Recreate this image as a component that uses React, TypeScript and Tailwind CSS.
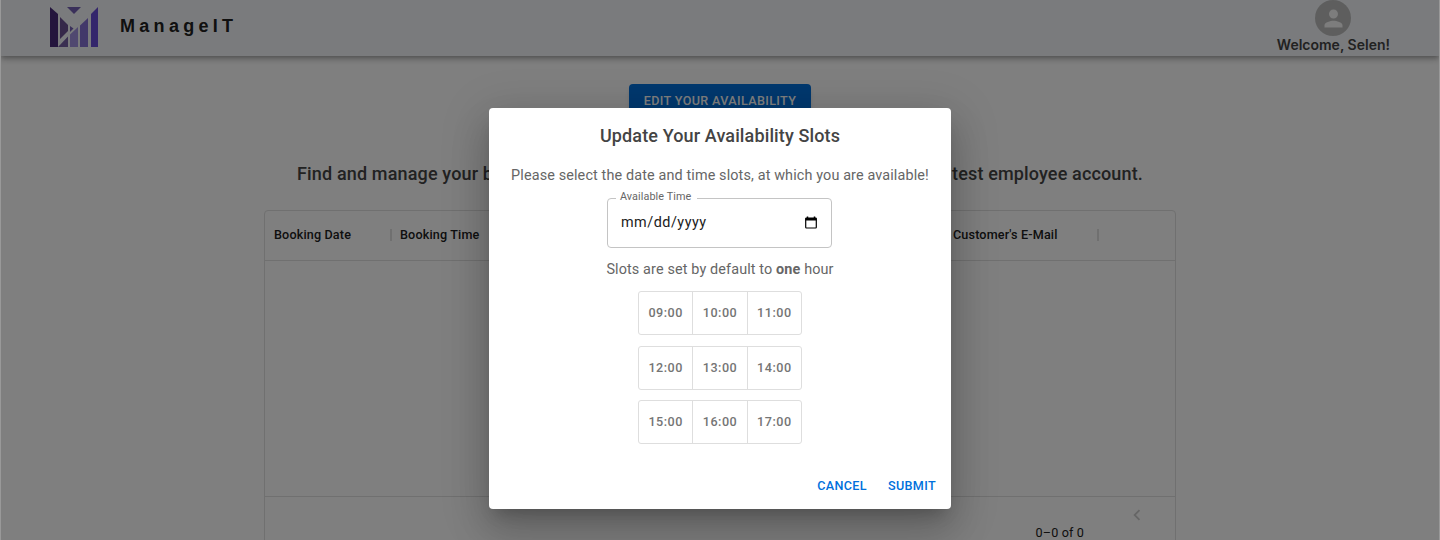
import React from "react";

function Logo() {
  return (
    <svg width="48" height="40" viewBox="0 0 48 40" className="block">
      <path d="M0 0L8 7V40H0Z" fill="#482a7a" />
      <path d="M10 10L18 18V24L10 32Z" fill="#6a5092" />
      <path d="M17 0H31L24 7Z" fill="#7460b4" />
      <path d="M20 19L23.5 21.5L20 25Z" fill="#7460b4" />
      <path d="M18 29.5V40H8Z" fill="#745fa4" />
      <path d="M20 27.5L28 20V40H20Z" fill="#a090e0" />
      <path d="M30 18.5L38 11V40H30Z" fill="#8470d4" />
      <path d="M41 7L48 0V40H41Z" fill="#684cd8" />
    </svg>
  );
}

function Header() {
  return (
    <header className="relative flex h-14 items-start justify-between bg-[#f4f7fa] pl-[49px] pr-[49px] shadow-[0_2px_4px_-1px_rgba(0,0,0,0.2),0_4px_5px_0_rgba(0,0,0,0.14),0_1px_10px_0_rgba(0,0,0,0.12)]">
      <div className="flex pt-[7px]">
        <Logo />
        <span className="ml-[22px] mt-[7px] font-['Liberation_Sans',sans-serif] text-[18px] font-bold leading-6 tracking-[4.3px] text-[#212121]">ManageIT</span>
      </div>
      <div className="flex flex-col items-center">
        <div className="flex h-9 w-9 items-center justify-center rounded-full bg-[#bdbdbd]">
          <svg width="27" height="27" viewBox="0 0 24 24" fill="#fafafa">
            <path d="M12 12c2.21 0 4-1.79 4-4s-1.79-4-4-4-4 1.79-4 4 1.79 4 4 4zm0 2c-2.67 0-8 1.34-8 4v2h16v-2c0-2.66-5.33-4-8-4z" />
          </svg>
        </div>
        <span className="font-['Inter',sans-serif] text-[14px] font-semibold leading-[18px] text-[#444]">Welcome, Selen!</span>
      </div>
    </header>
  );
}

function Slots({ times }: { times: string[] }) {
  return (
    <div className="flex h-11 w-[164px] overflow-hidden rounded-[3px] border border-[#dedede]">
      {times.map((t) => (
        <div key={t} className="flex flex-1 items-center justify-center border-l border-[#dedede] text-[12.6px] font-medium tracking-[0.5px] text-[#757575] first:border-l-0">{t}</div>
      ))}
    </div>
  );
}

function Bookings() {
  return (
    <section className="mt-6 h-[360px] w-[912px] rounded-[4px] border border-[#e0e0e0]">
      <div className="flex h-[50px] items-center border-b border-[#e0e0e0] text-[12.6px] font-medium tracking-[0.15px] text-[#212121]">
        <div className="flex w-[127px] items-center justify-between pl-[9px]">
          Booking Date<span className="h-3 w-[2px] bg-[#e0e0e0]" />
        </div>
        <div className="w-[561px] pl-2">Booking Time</div>
        <div className="flex w-[146px] items-center justify-between">
          Customer's E-Mail<span className="h-3 w-[2px] bg-[#e0e0e0]" />
        </div>
      </div>
      <div className="h-[236px] border-b border-[#e0e0e0]" />
      <div className="flex justify-end pr-[27px]">
        <span className="mt-[27px] text-[12.6px] leading-[18px] tracking-[0.15px] text-[#212121]">0–0 of 0</span>
        <svg className="ml-[42px] mt-[7px]" width="22" height="22" viewBox="0 0 24 24" fill="#cccccc">
          <path d="M15.41 7.41L14 6l-6 6 6 6 1.41-1.41L10.83 12z" />
        </svg>
      </div>
    </section>
  );
}

function Dialog() {
  return (
    <div role="dialog" className="flex h-[401px] w-[462px] flex-col items-center rounded-[4px] bg-white text-[#666] shadow-[0_11px_15px_-7px_rgba(0,0,0,0.2),0_24px_38px_3px_rgba(0,0,0,0.14),0_9px_46px_8px_rgba(0,0,0,0.12)]">
      <h2 className="mt-[14px] text-[18px] font-medium leading-7 tracking-[0.13px] text-[#444]">Update Your Availability Slots</h2>
      <p className="mt-4 whitespace-nowrap text-[14.4px] leading-5 tracking-[0.13px]">Please select the date and time slots, at which you are available!</p>
      <div className="relative mr-px mt-3 flex h-[50px] w-[225px] items-center justify-between rounded-[4px] border border-[#c4c4c4] px-[13px] text-[14.4px] text-[#212121]">
        <span className="absolute left-2 top-[-10px] h-4 bg-white pl-1 pr-[6px] text-[10.8px] leading-4 tracking-[0.09px] text-[#666]">Available Time</span>
        <span className="tracking-[0.5px]">mm/dd/yyyy</span>
        <svg width="14" height="14" viewBox="0 0 14 14">
          <path d="M3.5 0.5V3M10.5 0.5V3" stroke="#000" strokeWidth="1.5" />
          <rect x="1.7" y="2.2" width="10.6" height="9.8" rx="0.7" fill="none" stroke="#000" strokeWidth="1.2" />
          <path d="M1.5 2H12.5V4.5H1.5Z" />
        </svg>
      </div>
      <p className="mt-3 text-[14.4px] leading-5 tracking-[0.13px]">Slots are set by default to <b>one</b> hour</p>
      <div className="mt-[11px] flex flex-col">
        <Slots times={["09:00", "10:00", "11:00"]} />
        <div className="mb-[10px] mt-[11px]">
          <Slots times={["12:00", "13:00", "14:00"]} />
        </div>
        <Slots times={["15:00", "16:00", "17:00"]} />
      </div>
      <div className="mt-[33px] flex gap-[21px] self-end pr-[15px] text-[12.6px] font-medium leading-[18px] tracking-[0.36px] text-[#0070dc]">
        <button>CANCEL</button>
        <button>SUBMIT</button>
      </div>
    </div>
  );
}

export default function App() {
  return (
    <div className="relative h-[540px] overflow-hidden bg-white font-['Roboto',sans-serif]">
      <div className="h-full border-x border-transparent">
        <Header />
        <main className="flex flex-col items-center">
          <button className="mt-7 h-[33px] w-[182px] shrink-0 rounded-[4px] bg-[#0070dc] pt-px text-[12.6px] font-medium tracking-[0.36px] text-white shadow-md">EDIT YOUR AVAILABILITY</button>
          <div className="mt-11 flex h-[25px] w-[846px] items-center justify-between text-[18px] font-medium tracking-[0.15px] text-[#444]">
            <span className="whitespace-nowrap">Find and manage your b</span>
            <span className="whitespace-nowrap">test employee account.</span>
          </div>
          <Bookings />
        </main>
      </div>
      <div className="absolute inset-0 flex items-start justify-center border-x border-[#999] bg-black/50 pt-[108px]">
        <Dialog />
      </div>
    </div>
  );
}
